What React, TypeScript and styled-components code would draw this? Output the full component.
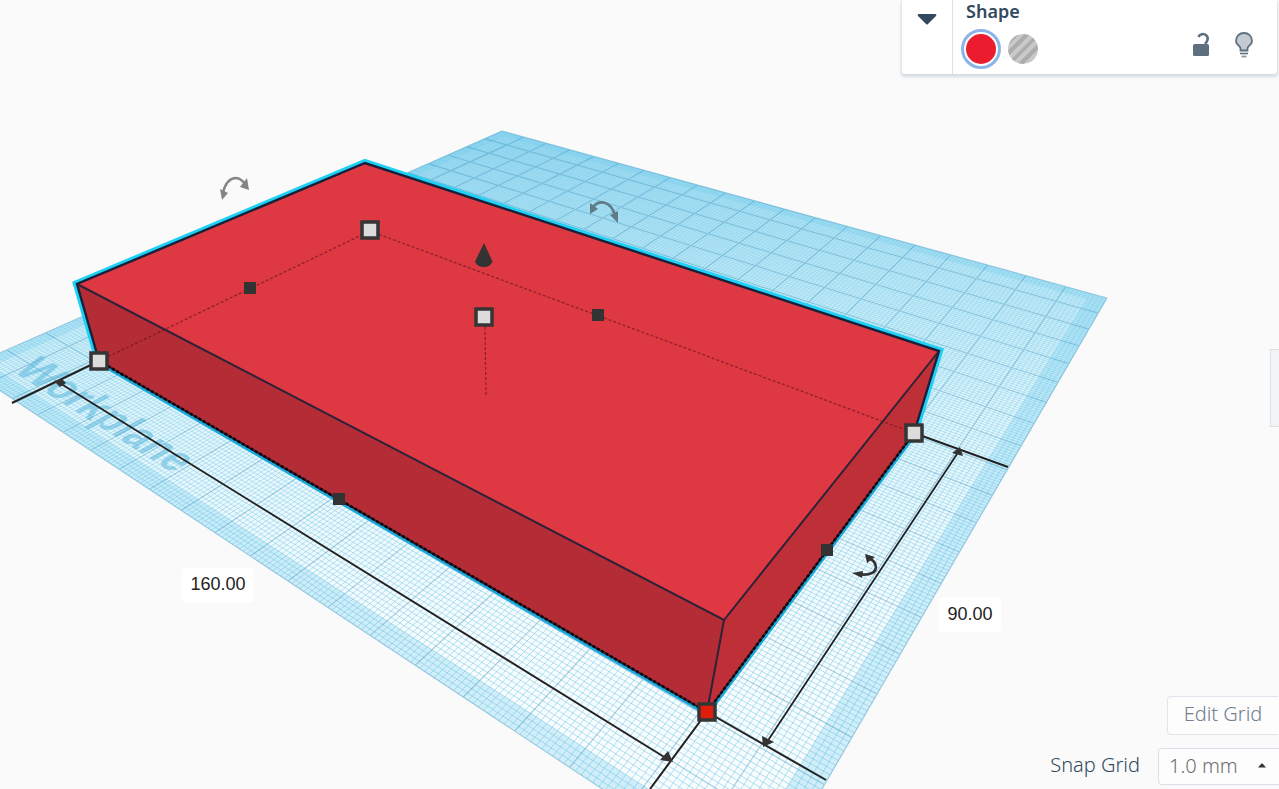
import React from "react";
import styled, { createGlobalStyle } from "styled-components";

const GlobalStyle = createGlobalStyle`
  *, *::before, *::after { box-sizing: border-box; }
  body {
    margin: 0;
    overflow: hidden;
    background: #fafafa;
    font-family: "Noto Sans", "Open Sans", sans-serif;
    color: #34495e;
  }
`;

/* ---------- workplane geometry ---------- */

type Point = [number, number];

/* Screen corners of the 200 mm workplane: left, front, right, back. */
const PLANE: [Point, Point, Point, Point] = [
  [-34, 368],
  [761, 894],
  [1107, 298],
  [502, 131],
];

function makeProjection([p0, p1, p2, p3]: [Point, Point, Point, Point], size: number) {
  const dx1 = p1[0] - p2[0];
  const dx2 = p3[0] - p2[0];
  const dx3 = p0[0] - p1[0] + p2[0] - p3[0];
  const dy1 = p1[1] - p2[1];
  const dy2 = p3[1] - p2[1];
  const dy3 = p0[1] - p1[1] + p2[1] - p3[1];
  const den = dx1 * dy2 - dx2 * dy1;
  const g = (dx3 * dy2 - dx2 * dy3) / den;
  const h = (dx1 * dy3 - dx3 * dy1) / den;
  const a = p1[0] - p0[0] + g * p1[0];
  const b = p3[0] - p0[0] + h * p3[0];
  const d = p1[1] - p0[1] + g * p1[1];
  const e = p3[1] - p0[1] + h * p3[1];
  return (u: number, v: number): string => {
    const s = u / size;
    const t = v / size;
    const w = g * s + h * t + 1;
    const x = (a * s + b * t + p0[0]) / w;
    const y = (d * s + e * t + p0[1]) / w;
    return `${x.toFixed(2)} ${y.toFixed(2)}`;
  };
}

const SIZE = 200;
const BAND = 4;
const project = makeProjection(PLANE, SIZE);

function gridPath(step: number, skip: number) {
  let d = "";
  for (let i = 0; i <= SIZE; i += step) {
    if (skip && i % skip === 0) continue;
    d += `M${project(i, 0)}L${project(i, SIZE)}M${project(0, i)}L${project(SIZE, i)}`;
  }
  return d;
}

function squarePath(inset: number) {
  const far = SIZE - inset;
  return `M${project(inset, inset)}L${project(far, inset)}L${project(far, far)}L${project(inset, far)}Z`;
}

const MINOR = gridPath(1, 10);
const MAJOR = gridPath(10, 0);
const OUTLINE = squarePath(0);
const FRAME = OUTLINE + squarePath(BAND);

/* ---------- layout ---------- */

const Editor = styled.main`
  position: relative;
  min-height: 100vh;
  display: flex;
  flex-direction: column;
  align-items: flex-end;
  justify-content: space-between;
  overflow: hidden;
`;

const Scene = styled.svg`
  position: absolute;
  inset: 0;
  width: 100%;
  height: 100%;
`;

const DimensionInput = styled.input<{ $x: number; $y: number; $chars: number }>`
  position: absolute;
  left: ${(p) => p.$x}px;
  top: ${(p) => p.$y}px;
  width: ${(p) => p.$chars * 10 + 12}px;
  height: 34px;
  padding: 0 0 2px;
  border: 0;
  border-radius: 3px;
  background: #fff;
  color: #222;
  font: 18px "Liberation Sans", Arial, sans-serif;
  text-align: center;
`;

const Inspector = styled.section`
  position: relative;
  display: flex;
  width: 375px;
  height: 74px;
  margin: 0 2px 6px 0;
  border-radius: 0 0 3px 3px;
  background: #fff;
  box-shadow: 0 2px 3px 1px #d5dce4;
`;

const CollapseButton = styled.button`
  display: flex;
  justify-content: center;
  width: 51px;
  padding: 13px 0 0;
  border: 0;
  border-right: 1px solid #dbe0ea;
  background: none;
`;

const InspectorBody = styled.div`
  flex: 1;
  padding: 0 22px 0 8px;
`;

const Title = styled.h2`
  margin: 0 0 0 5px;
  height: 29px;
  font-size: 18px;
  font-weight: 600;
  line-height: 22px;
`;

const Row = styled.div`
  display: flex;
  align-items: center;
`;

const Swatches = styled(Row)`
  flex: 1;
  gap: 6px;
`;

const Swatch = styled.button<{ $fill: string; $selected?: boolean }>`
  width: ${(p) => (p.$selected ? 40 : 32)}px;
  height: ${(p) => (p.$selected ? 40 : 32)}px;
  padding: ${(p) => (p.$selected ? 2 : 1)}px;
  border: ${(p) => (p.$selected ? "3px solid #8db4e8" : "0")};
  border-radius: 50%;
  background: none;

  &::before {
    content: "";
    display: block;
    height: 100%;
    border-radius: 50%;
    background: ${(p) => p.$fill};
  }
`;

const IconButton = styled.button`
  display: flex;
  padding: 0;
  margin: 0 0 8px 22px;
  border: 0;
  background: none;
`;

const SideTab = styled.button`
  position: relative;
  width: 9px;
  height: 78px;
  padding: 0;
  border: 1px solid #dbe0e6;
  border-right: 0;
  background: #f3f4f6;
`;

const GridControls = styled.footer`
  position: relative;
  display: flex;
  flex-direction: column;
  align-items: flex-end;
  gap: 13px;
  padding-bottom: 4px;
  font-size: 20px;
  font-weight: 300;
`;

const EditGridButton = styled.button`
  width: 112px;
  height: 39px;
  padding: 0 0 4px;
  border: 1px solid #e0e4ec;
  border-right-color: #fdfdfd;
  border-radius: 4px 0 0 4px;
  background: #fdfdfd;
  color: #71808f;
  font: inherit;
`;

const SnapLabel = styled.label`
  margin-right: 18px;
  padding-bottom: 4px;
`;

const SelectBox = styled.div`
  position: relative;
`;

const SnapSelect = styled.select`
  appearance: none;
  display: block;
  width: 121px;
  height: 37px;
  padding: 0 0 2px 10px;
  border: 1px solid #dbdfea;
  border-right: 0;
  border-radius: 4px 0 0 4px;
  background: #fdfdfd;
  color: #6b7072;
  font: inherit;
`;

const SelectArrow = styled.svg`
  position: absolute;
  right: 13px;
  top: 15px;
  pointer-events: none;
`;

/* ---------- scene parts ---------- */

const cornerHandles: Array<[number, number, string]> = [
  [99, 361, "#dcdcdc"],
  [370, 230, "#dcdcdc"],
  [484, 317, "#dcdcdc"],
  [914, 433, "#dcdcdc"],
  [707, 712, "#e01c0c"],
];

const edgeHandles: Point[] = [
  [250, 288],
  [598, 315],
  [339, 499],
  [827, 550],
];

function Workplane() {
  return (
    <g>
      <path d={OUTLINE} fill="url(#plane)" />
      <path d={FRAME} fillRule="evenodd" fill="#7fd0ee" fillOpacity="0.32" />
      <path d={MINOR} stroke="url(#minor)" strokeWidth="1" />
      <path d={MAJOR} stroke="#2b8fbf" strokeOpacity="0.4" strokeWidth="1.2" />
      <text
        transform="matrix(1.58 1 -2.1 1.15 12 371)"
        fontFamily="Liberation Sans, Arial, sans-serif"
        fontSize="20"
        fontWeight="700"
        fill="#4fb2d8"
        fillOpacity="0.5"
      >
        Workplane
      </text>
    </g>
  );
}

function Box() {
  return (
    <g strokeLinejoin="miter">
      <path d="M99 361L77 284L365 163L939 351L914 433" fill="none" stroke="#1ed0f5" strokeWidth="8" />
      <path d="M99 361L707 712L914 433" fill="none" stroke="#19aadd" strokeWidth="7" />
      <path d="M77 284L365 163L939 351L724 620Z" fill="#de3843" />
      <path d="M77 284L724 620L707 712L99 361Z" fill="#b42c35" />
      <path d="M724 620L939 351L914 433L707 712Z" fill="#be2f38" />
      <path d="M99 361L77 284L365 163L939 351L914 433" fill="none" stroke="#17213a" strokeWidth="2.4" />
      <path d="M77 284L724 620L939 351M724 620L707 712" fill="none" stroke="#2d2238" strokeWidth="2" />
      <path d="M99 361L707 712L914 433" fill="none" stroke="#3a1a26" strokeWidth="2" />
      <path d="M99 361L707 712L914 433" fill="none" stroke="#080a10" strokeWidth="2.6" strokeDasharray="3 2" />
      <path
        d="M99 361L370 231L914 433M485 327L486 395"
        fill="none"
        stroke="#6d1522"
        strokeOpacity="0.7"
        strokeWidth="1.3"
        strokeDasharray="3 2"
      />
    </g>
  );
}

function Dimensions() {
  return (
    <g stroke="#222" strokeWidth="2" fill="none">
      <path d="M99 361L12 403M914 433L1008 467M826 780L707 712L650 789" />
      <path d="M58 382L669 760M959 451L765 745" strokeWidth="1.8" />
      <g fill="#333" stroke="none">
        <path d="M54 381L62 379L66 383L60 387Z" />
        <path d="M673 762L660 760L668 751Z" />
        <path d="M960 447L952 453L963 456Z" />
        <path d="M763 747L762 736L774 742Z" />
      </g>
    </g>
  );
}

function RotateArrow({ color, arc, heads }: { color: string; arc: string; heads: string }) {
  return (
    <g>
      <path d={arc} fill="none" stroke={color} strokeWidth="2.6" />
      <path d={heads} fill={color} />
    </g>
  );
}

export default function App() {
  return (
    <>
      <GlobalStyle />
      <Editor>
        <Scene aria-label="3D workplane" fill="none">
          <defs>
            <linearGradient id="plane" gradientUnits="userSpaceOnUse" x1="500" y1="130" x2="500" y2="640">
              <stop offset="0" stopColor="#a2dcf1" />
              <stop offset="0.3" stopColor="#c6ebf7" />
              <stop offset="0.55" stopColor="#e2f5fb" />
              <stop offset="1" stopColor="#f8fcfd" />
            </linearGradient>
            <linearGradient id="minor" gradientUnits="userSpaceOnUse" x1="500" y1="130" x2="500" y2="640">
              <stop offset="0" stopColor="#4fbce3" stopOpacity="0.18" />
              <stop offset="0.35" stopColor="#4fbce3" stopOpacity="0.26" />
              <stop offset="1" stopColor="#4fbce3" stopOpacity="0.44" />
            </linearGradient>
          </defs>
          <Workplane />
          <Dimensions />
          <Box />
          {edgeHandles.map(([x, y]) => (
            <rect key={`${x}-${y}`} x={x - 6} y={y - 6} width="12" height="12" fill="#333" />
          ))}
          {cornerHandles.map(([x, y, fill]) => (
            <rect
              key={`${x}-${y}`}
              x={x - 8}
              y={y - 8}
              width="16"
              height="16"
              fill={fill}
              stroke="#353535"
              strokeWidth="3.5"
            />
          ))}
          <path d="M484 243L492.500 261.500Q490 267 484 267Q477 267 475 261.500Z" fill="#333" />
          <RotateArrow
            color="#858585"
            arc="M223 192C226 182 231 178 236 178C240 178 243 181 246 185"
            heads="M220 189L228 193L222 200ZM240 187L247 178L249 190Z"
          />
          <RotateArrow
            color="#5d7c85"
            arc="M593 207C599 200 610 200 615 215"
            heads="M590 203L598 209L590 214ZM610 215L618 211L618 223Z"
          />
          <RotateArrow
            color="#333"
            arc="M869 558C877 562 878 570 872 573C868 575 863 575 858 574"
            heads="M865 554L875 557L867 563ZM852 573L863 571L862 578Z"
          />
        </Scene>
        <DimensionInput aria-label="Length" defaultValue="160.00" $x={182} $y={568} $chars={6} />
        <DimensionInput aria-label="Width" defaultValue="90.00" $x={939} $y={598} $chars={5} />

        <Inspector>
          <CollapseButton aria-label="Collapse">
            <svg width="20" height="14">
              <path d="M2 1H18Q20 1 19 3L11 11Q10 12 9 11L1 3Q0 1 2 1Z" fill="#34495e" />
            </svg>
          </CollapseButton>
          <InspectorBody>
            <Title>Shape</Title>
            <Row>
              <Swatches>
                <Swatch aria-label="Solid" $selected $fill="#eb1c2d" />
                <Swatch
                  aria-label="Hole"
                  $fill="repeating-linear-gradient(135deg, #c9c9c9 0 4px, #adadad 4px 8px)"
                />
              </Swatches>
              <IconButton aria-label="Lock">
                <svg width="20" height="26">
                  <rect x="2" y="12" width="16" height="12" rx="1.500" fill="#5e6f80" />
                  <path
                    d="M7.500 5C8.500 2 12.500 1 15.200 3.200C17.600 5.500 17 9 14 12"
                    fill="none"
                    stroke="#5e6f80"
                    strokeWidth="2.600"
                  />
                </svg>
              </IconButton>
              <IconButton aria-label="Visibility">
                <svg width="22" height="28">
                  <path
                    d="M7.500 19.500V17.500C7.500 15 3 14 3 10C3 5 6.500 2 11 2S19 5 19 10C19 14 14.500 15 14.500 17.500V19.500Z"
                    fill="#c4cad1"
                    stroke="#5e6f80"
                    strokeWidth="1.800"
                  />
                  <path d="M7 22.500H15" stroke="#5e6f80" strokeWidth="1.600" />
                  <path d="M8.500 25.500H13.500" stroke="#8a96a2" strokeWidth="1.800" />
                </svg>
              </IconButton>
            </Row>
          </InspectorBody>
        </Inspector>

        <SideTab aria-label="Open panel" />

        <GridControls>
          <EditGridButton>Edit Grid</EditGridButton>
          <Row>
            <SnapLabel htmlFor="snap">Snap Grid</SnapLabel>
            <SelectBox>
              <SnapSelect id="snap" defaultValue="1.0">
                <option value="1.0">1.0 mm</option>
              </SnapSelect>
              <SelectArrow width="8" height="5">
                <path d="M0 4.500L3.500 0.500H4.500L8 4.500Z" fill="#333" />
              </SelectArrow>
            </SelectBox>
          </Row>
        </GridControls>
      </Editor>
    </>
  );
}
